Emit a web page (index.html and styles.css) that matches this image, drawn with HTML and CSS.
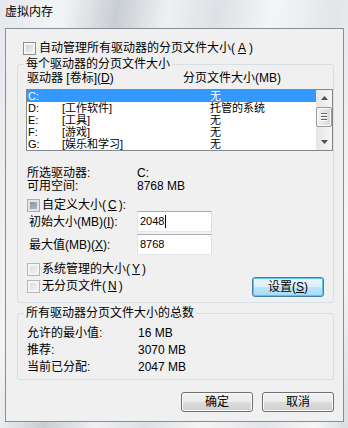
FILE: index.html
```html
<!DOCTYPE html>
<html lang="zh-CN">
<head>
    <meta charset="UTF-8">
    <meta name="viewport" content="width=device-width, initial-scale=1.0">
    <title>虚拟内存</title>
    <link rel="stylesheet" href="styles.css">
</head>
<body>
    <div class="window">
        <div class="titlebar">虚拟内存</div>
        <div class="dialog">
            <div class="check top-check"><span class="box"></span>自动管理所有驱动器的分页文件大小(<u>A</u>)</div>

            <fieldset class="group">
                <legend>每个驱动器的分页文件大小</legend>
                <div class="list-head">
                    <span class="head-drive">驱动器 [卷标](<u>D</u>)</span>
                    <span>分页文件大小(MB)</span>
                </div>
                <div class="listbox">
                    <div class="rows">
                        <div class="row selected"><span class="c1">C:</span><span class="c2"></span><span>无</span></div>
                        <div class="row"><span class="c1">D:</span><span class="c2">[工作软件]</span><span>托管的系统</span></div>
                        <div class="row"><span class="c1">E:</span><span class="c2">[工具]</span><span>无</span></div>
                        <div class="row"><span class="c1">F:</span><span class="c2">[游戏]</span><span>无</span></div>
                        <div class="row"><span class="c1">G:</span><span class="c2">[娱乐和学习]</span><span>无</span></div>
                    </div>
                    <div class="scrollbar">
                        <div class="arrow">
                            <svg width="7" height="4" viewBox="0 0 7 4"><path d="M0 4L3.5 0L7 4Z" fill="#4f4f4f"/></svg>
                        </div>
                        <div class="thumb"><i></i><i></i><i></i></div>
                        <div class="track"></div>
                        <div class="arrow">
                            <svg width="7" height="4" viewBox="0 0 7 4"><path d="M0 0L3.5 4L7 0Z" fill="#4f4f4f"/></svg>
                        </div>
                    </div>
                </div>

                <div class="info">
                    <span>所选驱动器:</span><span>C:</span>
                    <span>可用空间:</span><span>8768 MB</span>
                </div>

                <div class="check custom"><span class="box dot"></span>自定义大小(<u>C</u>):</div>

                <div class="sizes">
                    <label>初始大小(MB)(<u>I</u>):</label>
                    <div class="textbox">2048<span class="caret"></span></div>
                    <label>最大值(MB)(<u>X</u>):</label>
                    <div class="textbox">8768</div>
                </div>

                <div class="bottom">
                    <div class="checks">
                        <div class="check"><span class="box off"></span>系统管理的大小(<u>Y</u>)</div>
                        <div class="check"><span class="box off"></span>无分页文件(<u>N</u>)</div>
                    </div>
                    <button type="button" class="btn focus">设置(<u>S</u>)</button>
                </div>
            </fieldset>

            <fieldset class="group totals">
                <legend>所有驱动器分页文件大小的总数</legend>
                <div class="info total-info">
                    <span>允许的最小值:</span><span>16 MB</span>
                    <span>推荐:</span><span>3070 MB</span>
                    <span>当前已分配:</span><span>2047 MB</span>
                </div>
            </fieldset>

            <div class="actions">
                <button type="button" class="btn">确定</button>
                <button type="button" class="btn">取消</button>
            </div>
        </div>
    </div>
</body>
</html>
```

FILE: styles.css
```css
body {
    margin: 0;
    font-family: "Liberation Sans", "Noto Sans CJK SC", sans-serif;
    font-size: 12px;
    line-height: 12px;
    color: #000;
}
u {
    text-decoration: underline;
    text-underline-offset: 1px;
}
.window {
    width: 348px;
    height: 428px;
    box-sizing: border-box;
    padding: 0 4px 6px 5px;
    display: flex;
    flex-direction: column;
    background: linear-gradient(100deg, #e4e8ec 0%, #f3f4f6 15%, #c9ced4 28%, #eef0f2 40%, #dde1e5 52%, #f4f5f6 65%, #e2e5e9 80%, #f5f6f7 92%, #d8dde2 100%);
}
.titlebar {
    height: 28px;
    line-height: 24px;
    color: #000;
}
.dialog {
    flex: 1;
    border: 1px solid #8a8e93;
    background: #f0f0f0;
    padding: 0 9px 0 11px;
    display: flex;
    flex-direction: column;
}
.check {
    display: flex;
    align-items: center;
    height: 13px;
    line-height: 13px;
    gap: 3px;
}
.top-check {
    margin-top: 13px;
    padding-left: 6px;
}
.box {
    width: 13px;
    height: 13px;
    box-sizing: border-box;
    flex: none;
    border: 1px solid #8e8f8f;
    background: linear-gradient(135deg, #c9cdd3, #f6f6f6);
    box-shadow: inset 0 0 0 2px #f4f4f4;
}
.box.off {
    border-color: #b6b6b6;
    background: linear-gradient(135deg, #dcdcdc, #f4f4f4);
}
.box.dot {
    border-color: #a9adb1;
    background: linear-gradient(135deg, #7d8f9f, #b4c1cc);
    box-shadow: inset 0 0 0 2px #e2e4e6;
}

.group {
    margin: 3px 0 0;
    padding: 2px 0 5px 8px;
    border: 1px solid #d5dfe5;
    border-radius: 3px;
    min-width: 0;
}
.group legend {
    padding: 0 2px;
    margin-left: -2px;
    line-height: 12px;
}
.list-head {
    display: flex;
    padding-left: 1px;
    height: 12px;
}
.head-drive {
    width: 156px;
}
.listbox {
    margin-top: 5px;
    height: 62px;
    box-sizing: border-box;
    border: 1px solid #828790;
    background: #fff;
    display: flex;
}
.rows {
    flex: 1;
    font-size: 11px;
}
.row {
    display: flex;
    height: 12px;
    line-height: 12px;
    padding-left: 1px;
}
.row.selected {
    background: #3399ff;
    color: #fff;
}
.c1 {
    width: 34px;
}
.c2 {
    width: 148px;
}
.scrollbar {
    width: 16px;
    display: flex;
    flex-direction: column;
    background: linear-gradient(to right, #e6e6e6, #f5f5f5);
}
.arrow {
    height: 16px;
    display: flex;
    align-items: center;
    justify-content: center;
}
.thumb {
    height: 20px;
    margin: 1px 0 0;
    box-sizing: border-box;
    border: 1px solid #989898;
    border-radius: 2px;
    background: linear-gradient(to right, #f4f4f4, #e4e4e4 50%, #d6d6d6);
    box-shadow: inset 0 0 0 1px #fbfbfb;
    display: flex;
    flex-direction: column;
    align-items: center;
    justify-content: center;
    gap: 1px;
}
.thumb i {
    display: block;
    width: 6px;
    height: 1px;
    background: #666;
    border-bottom: 1px solid #fff;
}
.track {
    flex: 1;
}

.info {
    display: grid;
    grid-template-columns: 110px 1fr;
    margin-top: 16px;
    padding-left: 1px;
    line-height: 13px;
}
.custom {
    margin-top: 6px;
    padding-left: 1px;
    height: 12px;
    gap: 2px;
}
.sizes {
    display: grid;
    grid-template-columns: 108px 75px;
    row-gap: 2px;
    align-items: center;
    padding-left: 3px;
}
.textbox {
    height: 21px;
    box-sizing: border-box;
    border: 1px solid;
    border-color: #abadb3 #dbdfe6 #e3e9ef #e2e3ea;
    background: #fff;
    padding-left: 2px;
    font-size: 11px;
    line-height: 19px;
    display: flex;
    align-items: center;
}
.caret {
    width: 1px;
    height: 13px;
    background: #000;
    margin-left: 1px;
}
.bottom {
    display: flex;
    justify-content: space-between;
    align-items: flex-end;
    margin-top: 8px;
    padding-left: 1px;
}
.checks {
    display: flex;
    flex-direction: column;
    gap: 4px;
    padding-bottom: 4px;
}
.checks .check {
    gap: 2px;
}
.btn {
    width: 72px;
    height: 20px;
    padding: 0;
    border: 1px solid #707070;
    border-radius: 3px;
    background: linear-gradient(#f2f2f2 0%, #ebebeb 50%, #dddddd 50%, #cfcfcf 100%);
    box-shadow: inset 0 0 0 1px #fbfbfb;
    font-family: inherit;
    font-size: 12px;
    line-height: 12px;
    color: #000;
}
.btn.focus {
    margin-right: 9px;
    border-color: #3c7fb1;
    background: linear-gradient(#eaf6fd 0%, #d9f0fc 50%, #bee6fd 50%, #a7d9f5 100%);
    box-shadow: inset 0 0 0 1px #5fc3e8;
}

.totals {
    margin-top: 4px;
    padding: 6px 0 3px 8px;
}
.total-info {
    margin-top: 0;
    grid-template-columns: 111px 1fr;
    line-height: 17px;
}
.actions {
    display: flex;
    justify-content: flex-end;
    gap: 9px;
    margin-top: 12px;
}
```
